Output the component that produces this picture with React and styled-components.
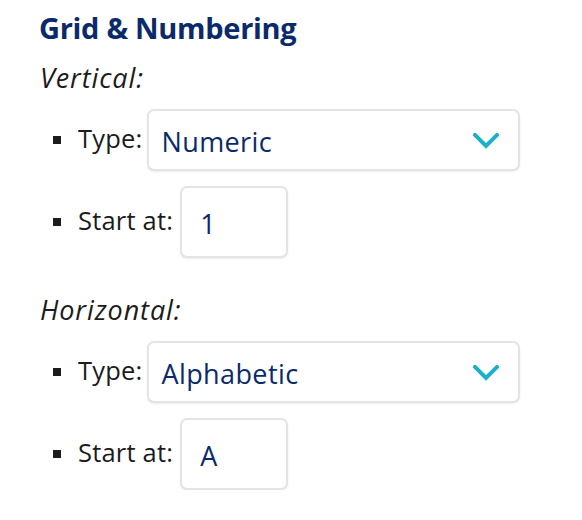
import React from "react";
import styled, { createGlobalStyle } from "styled-components";

const Global = createGlobalStyle`
  html, body { margin: 0; padding: 0; background: #fff; }
  body { font-family: "Open Sans", Roboto, Arial, sans-serif; color: #1c1c1c; }
`;

const Page = styled.div`
  padding: 10px 0 0 39px;
  width: 582px;
  box-sizing: border-box;
`;

const Title = styled.h2`
  margin: 0;
  font-size: 29px;
  line-height: 36px;
  font-weight: 700;
  color: #0b2a6b;
  letter-spacing: -0.3px;
`;

const Section = styled.em`
  display: block;
  margin: ${(p) => p.$top}px 0 15px 1px;
  font-size: 27px;
  line-height: 32px;
  font-style: italic;
  color: #1c1c1c;
  letter-spacing: 0.9px;
`;

const List = styled.ul`
  list-style: none;
  margin: 0;
  padding: 0;
  display: flex;
  flex-direction: column;
  gap: 15px;
`;

const Item = styled.li`
  display: flex;
  align-items: center;
`;

const Bullet = styled.span`
  width: 8px;
  height: 8px;
  background: #1c1c1c;
  margin: 0 17px 0 14px;
  flex: none;
`;

const Label = styled.span`
  font-size: 25.5px;
  line-height: 30px;
  color: #1c1c1c;
  margin-right: ${(p) => p.$gap}px;
  position: relative;
  top: -2px;
  letter-spacing: 0.2px;
`;

const Box = styled.div`
  box-sizing: border-box;
  height: ${(p) => p.$h}px;
  width: ${(p) => p.$w}px;
  border: 2px solid #e4e4e4;
  border-radius: 7px;
  box-shadow: 0 1px 2px rgba(0, 0, 0, 0.08);
  background: #fff;
  display: flex;
  align-items: center;
  justify-content: space-between;
  padding: 2px 19px 0 ${(p) => p.$pl}px;
  font-size: 27px;
  font-weight: 500;
  letter-spacing: 0.4px;
  color: #0b2a6b;
`;

const Chevron = () => (
  <svg width="26" height="16" viewBox="0 0 26 16">
    <polyline
      points="2,2 13,13 24,2"
      fill="none"
      stroke="#1bb2c9"
      strokeWidth="4"
      strokeLinecap="square"
    />
  </svg>
);

function Block({ title, top, typeValue, start }) {
  return (
    <>
      <Section $top={top}>{title}</Section>
      <List>
        <Item>
          <Bullet />
          <Label $gap={5}>Type:</Label>
          <Box $h={62} $w={373} $pl={12}>
            <span>{typeValue}</span>
            <Chevron />
          </Box>
        </Item>
        <Item>
          <Bullet />
          <Label $gap={7}>Start at:</Label>
          <Box $h={72} $w={108} $pl={18}>
            <span>{start}</span>
          </Box>
        </Item>
      </List>
    </>
  );
}

export default function App() {
  return (
    <>
      <Global />
      <Page>
        <Title>Grid &amp; Numbering</Title>
        <Block title="Vertical:" top={16} typeValue="Numeric" start="1" />
        <Block title="Horizontal:" top={36} typeValue="Alphabetic" start="A" />
      </Page>
    </>
  );
}
